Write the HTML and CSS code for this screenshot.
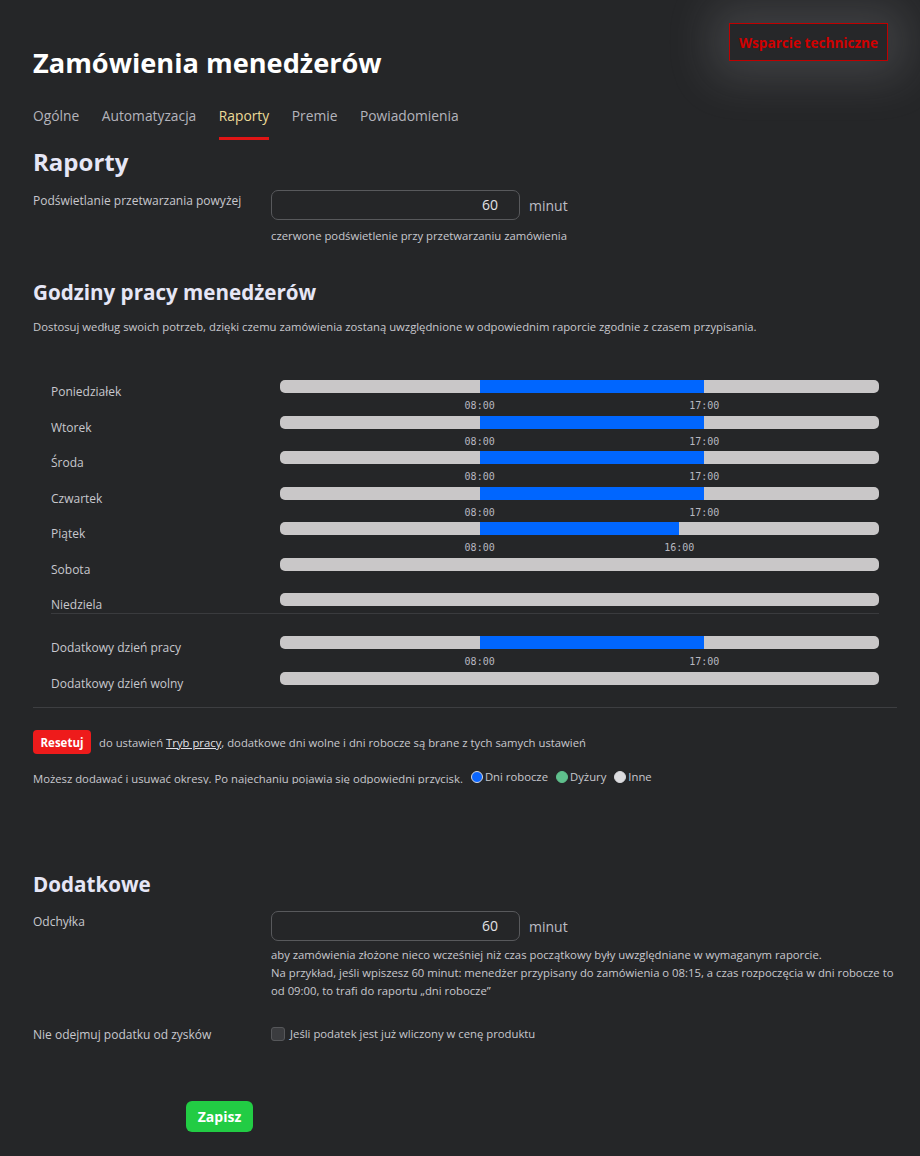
FILE: index.html
```html
<!DOCTYPE html>
<html lang="pl">
<head>
<meta charset="utf-8">
<title>Zamówienia menedżerów</title>
<link rel="stylesheet" href="styles.css">
</head>
<body>
<div class="page">
  <header class="header">
    <h1 class="title">Zamówienia menedżerów</h1>
    <button class="support">Wsparcie techniczne</button>
  </header>

  <nav class="tabs">
    <a class="tab">Ogólne</a>
    <a class="tab">Automatyzacja</a>
    <a class="tab active">Raporty</a>
    <a class="tab">Premie</a>
    <a class="tab">Powiadomienia</a>
  </nav>

  <h2 class="h2 first">Raporty</h2>
  <div class="field">
    <div class="label">Podświetlanie przetwarzania powyżej</div>
    <div class="control">
      <div class="input-line">
        <div class="input">60</div>
        <span class="unit">minut</span>
      </div>
      <div class="help">czerwone podświetlenie przy przetwarzaniu zamówienia</div>
    </div>
  </div>

  <h2 class="h2 section">Godziny pracy menedżerów</h2>
  <p class="desc">Dostosuj według swoich potrzeb, dzięki czemu zamówienia zostaną uwzględnione w odpowiednim raporcie zgodnie z czasem przypisania.</p>

  <div class="schedule">
    <div class="week">
      <div class="day">
        <div class="day-label">Poniedziałek</div>
        <div class="track-wrap">
          <div class="track"><div class="seg" style="left:33.333%;width:37.5%"></div></div>
          <span class="time" style="left:33.333%">08:00</span>
          <span class="time" style="left:70.833%">17:00</span>
        </div>
      </div>
      <div class="day">
        <div class="day-label">Wtorek</div>
        <div class="track-wrap">
          <div class="track"><div class="seg" style="left:33.333%;width:37.5%"></div></div>
          <span class="time" style="left:33.333%">08:00</span>
          <span class="time" style="left:70.833%">17:00</span>
        </div>
      </div>
      <div class="day">
        <div class="day-label">Środa</div>
        <div class="track-wrap">
          <div class="track"><div class="seg" style="left:33.333%;width:37.5%"></div></div>
          <span class="time" style="left:33.333%">08:00</span>
          <span class="time" style="left:70.833%">17:00</span>
        </div>
      </div>
      <div class="day">
        <div class="day-label">Czwartek</div>
        <div class="track-wrap">
          <div class="track"><div class="seg" style="left:33.333%;width:37.5%"></div></div>
          <span class="time" style="left:33.333%">08:00</span>
          <span class="time" style="left:70.833%">17:00</span>
        </div>
      </div>
      <div class="day">
        <div class="day-label">Piątek</div>
        <div class="track-wrap">
          <div class="track"><div class="seg" style="left:33.333%;width:33.333%"></div></div>
          <span class="time" style="left:33.333%">08:00</span>
          <span class="time" style="left:66.667%">16:00</span>
        </div>
      </div>
      <div class="day">
        <div class="day-label">Sobota</div>
        <div class="track-wrap"><div class="track"></div></div>
      </div>
      <div class="day last">
        <div class="day-label">Niedziela</div>
        <div class="track-wrap"><div class="track"></div></div>
      </div>
    </div>
    <div class="extra">
      <div class="day">
        <div class="day-label">Dodatkowy dzień pracy</div>
        <div class="track-wrap">
          <div class="track"><div class="seg" style="left:33.333%;width:37.5%"></div></div>
          <span class="time" style="left:33.333%">08:00</span>
          <span class="time" style="left:70.833%">17:00</span>
        </div>
      </div>
      <div class="day">
        <div class="day-label">Dodatkowy dzień wolny</div>
        <div class="track-wrap"><div class="track"></div></div>
      </div>
    </div>
  </div>

  <div class="divider"></div>

  <div class="reset-row">
    <button class="reset">Resetuj</button>
    <span class="reset-text">do ustawień <a class="link">Tryb pracy</a>, dodatkowe dni wolne i dni robocze są brane z tych samych ustawień</span>
  </div>

  <div class="legend">
    <span>Możesz dodawać i usuwać okresy. Po najechaniu pojawia się odpowiedni przycisk.</span>
    <span class="legend-item"><i class="dot blue"></i>Dni robocze</span>
    <span class="legend-item"><i class="dot green"></i>Dyżury</span>
    <span class="legend-item"><i class="dot gray"></i>Inne</span>
  </div>

  <h2 class="h2 extra-title">Dodatkowe</h2>
  <div class="field odch">
    <div class="label">Odchyłka</div>
    <div class="control">
      <div class="input-line">
        <div class="input">60</div>
        <span class="unit">minut</span>
      </div>
      <div class="help long">aby zamówienia złożone nieco wcześniej niż czas początkowy były uwzględniane w wymaganym raporcie.<br>Na przykład, jeśli wpiszesz 60 minut: menedżer przypisany do zamówienia o 08:15, a czas rozpoczęcia w dni robocze to<br>od 09:00, to trafi do raportu „dni robocze”</div>
    </div>
  </div>

  <div class="field check-field">
    <div class="label">Nie odejmuj podatku od zysków</div>
    <label class="check"><span class="box"></span>Jeśli podatek jest już wliczony w cenę produktu</label>
  </div>

  <div class="actions">
    <button class="save">Zapisz</button>
  </div>
</div>
</body>
</html>
```

FILE: styles.css
```css
* { box-sizing: border-box; }
html, body { margin: 0; padding: 0; }
body {
  background: #252628;
  color: #c8c8ce;
  font-family: "Open Sans", "Noto Sans", sans-serif;
  font-size: 11.3px;
  height: 1156px;
  overflow: hidden;
}
.page { padding: 0 32px 0 33px; }

.header {
  display: flex;
  justify-content: space-between;
  align-items: flex-start;
  padding-top: 23px;
}
.title {
  margin: 22px 0 0;
  font-size: 27.2px;
  line-height: 36px;
  font-weight: 700;
  color: #ffffff;
}
.support {
  width: 159px;
  height: 38px;
  background: #262729;
  border: 1px solid #c00000;
  color: #d00000;
  font-family: inherit;
  font-weight: 700;
  font-size: 13.6px;
  padding: 0;
  box-shadow: 0 0 45px 18px rgba(200, 200, 205, 0.16);
}

.tabs {
  display: flex;
  gap: 22.5px;
  margin-top: 25px;
}
.tab {
  font-size: 13.8px;
  line-height: 20px;
  color: #b4b4bc;
  padding-bottom: 11px;
  border-bottom: 3px solid transparent;
}
.tab.active { color: #ecdb98; border-bottom-color: #e01515; }

.h2 {
  margin: 0;
  font-weight: 700;
  color: #e6e6f6;
}
.h2.first { font-size: 24px; line-height: 30px; margin-top: 7px; }
.h2.section { font-size: 20.6px; line-height: 26px; margin-top: 34px; }
.h2.extra-title { font-size: 20.6px; line-height: 26px; margin-top: 87px; }

.field { display: flex; margin-top: 13px; }
.field.odch { margin-top: 14px; }
.label { width: 238px; flex: none; padding-top: 2px; line-height: 18px; font-size: 12px; }
.control { display: flex; flex-direction: column; }
.input-line { display: flex; align-items: center; gap: 9px; }
.input {
  width: 249px;
  height: 30px;
  border: 1.5px solid #58595c;
  border-radius: 7px;
  text-align: right;
  padding-right: 21px;
  font-size: 14px;
  line-height: 27px;
  color: #e2e2e6;
}
.unit { font-size: 14px; color: #bdbdc4; }
.help { margin-top: 7px; line-height: 18px; }
.help.long { margin-top: 5px; white-space: nowrap; }

.desc { margin: 13px 0 0; line-height: 18px; }

.schedule { margin: 44px 18px 0 18px; width: 828px; }
.week { border-bottom: 1px solid #3a3b3e; }
.day { display: flex; height: 35.5px; }
.day.last { height: 20px; }
.extra { margin-top: 22px; }
.extra .day { height: 36px; }
.extra .day:last-child { height: 20px; }
.day-label { width: 229px; flex: none; padding-top: 3px; line-height: 18px; font-size: 12px; }
.track-wrap { position: relative; flex: 1; }
.track {
  position: relative;
  height: 13px;
  background: #c9c7c8;
  border-radius: 5px;
  overflow: hidden;
}
.seg { position: absolute; top: 0; bottom: 0; background: #0066ff; }
.time {
  position: absolute;
  top: 20px;
  transform: translateX(-50%);
  font-family: "DejaVu Sans Mono", "Liberation Mono", monospace;
  font-size: 10px;
  line-height: 12px;
  color: #b8b8c0;
}

.divider { height: 1px; background: #3d3e41; margin: 15px -9px 0 0; }

.reset-row { display: flex; align-items: center; gap: 8px; margin-top: 22px; }
.reset {
  width: 58px;
  height: 24px;
  background: #ee1b1b;
  border: none;
  border-radius: 4px;
  color: #fff;
  font-family: inherit;
  font-weight: 700;
  font-size: 11.5px;
  padding: 0;
}
.link { color: #e0e0e6; text-decoration: underline; }

.legend {
  margin-top: 16px;
  height: 14px;
  overflow: hidden;
  line-height: 18px;
  display: flex;
  gap: 4px;
  white-space: nowrap;
}
.legend-item { display: inline-flex; align-items: center; gap: 2px; margin-left: 4px; }
.dot {
  display: inline-block;
  width: 12px;
  height: 12px;
  border-radius: 50%;
  border: 1px solid #d8d8dc;
}
.dot.blue { background: #0b66ff; }
.dot.green { background: #5fbf8c; border-color: #5fbf8c; }
.dot.gray { background: #dcdcdf; }

.check-field { margin-top: 24px; }
.check { display: flex; align-items: center; gap: 5px; line-height: 18px; }
.box {
  width: 14px;
  height: 14px;
  border-radius: 3px;
  background: #3b3c3f;
  border: 1px solid #56575a;
}

.actions { margin-top: 57px; padding-left: 153px; }
.save {
  width: 67px;
  height: 31px;
  background: #22cc44;
  border: none;
  border-radius: 6px;
  color: #fff;
  font-family: inherit;
  font-weight: 700;
  font-size: 14px;
  padding: 0;
}
```
